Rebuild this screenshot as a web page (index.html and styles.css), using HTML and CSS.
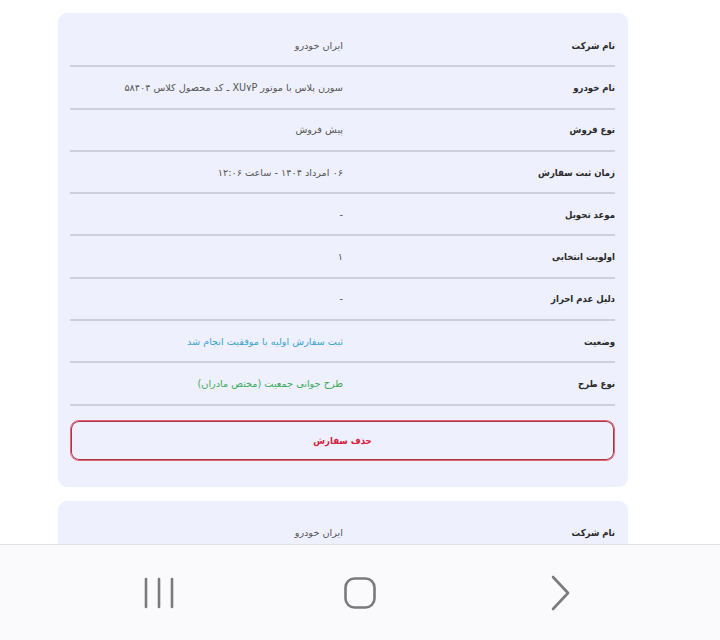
FILE: index.html
```html
<!DOCTYPE html>
<html lang="fa" dir="rtl">
<head>
<meta charset="utf-8">
<title>سفارش‌ها</title>
<link rel="stylesheet" href="styles.css">
</head>
<body>
<main class="page">
  <section class="card">
    <div class="row"><div class="label">نام شرکت</div><div class="value">ایران خودرو</div></div>
    <div class="row"><div class="label">نام خودرو</div><div class="value">سورن پلاس با موتور XU۷P ـ کد محصول کلاس ۵۸۴۰۴</div></div>
    <div class="row"><div class="label">نوع فروش</div><div class="value">پیش فروش</div></div>
    <div class="row"><div class="label">زمان ثبت سفارش</div><div class="value">۰۶ امرداد ۱۴۰۴ - ساعت ۱۲:۰۶</div></div>
    <div class="row"><div class="label">موعد تحویل</div><div class="value">-</div></div>
    <div class="row"><div class="label">اولویت انتخابی</div><div class="value">۱</div></div>
    <div class="row"><div class="label">دلیل عدم احراز</div><div class="value">-</div></div>
    <div class="row"><div class="label">وضعیت</div><div class="value status">ثبت سفارش اولیه با موفقیت انجام شد</div></div>
    <div class="row"><div class="label">نوع طرح</div><div class="value plan">طرح جوانی جمعیت (مختص مادران)</div></div>
    <button class="delete">حذف سفارش</button>
  </section>
  <section class="card">
    <div class="row"><div class="label">نام شرکت</div><div class="value">ایران خودرو</div></div>
    <div class="row"><div class="label">نام خودرو</div><div class="value">سورن پلاس با موتور XU۷P ـ کد محصول کلاس ۵۸۴۰۴</div></div>
  </section>
</main>
<nav class="navbar" dir="ltr">
  <div class="slot">
    <svg width="32" height="34" viewBox="0 0 32 34"><g stroke="#7b7b7b" stroke-width="2.6" stroke-linecap="round"><line x1="3" y1="3" x2="3" y2="31"/><line x1="16" y1="3" x2="16" y2="31"/><line x1="29" y1="3" x2="29" y2="31"/></g></svg>
  </div>
  <div class="slot">
    <svg width="34" height="34" viewBox="0 0 34 34"><rect x="2.5" y="2.5" width="29" height="29" rx="9" fill="none" stroke="#7b7b7b" stroke-width="2.6"/></svg>
  </div>
  <div class="slot">
    <svg width="22" height="36" viewBox="0 0 22 36"><polyline points="3,2 18,18 3,34" fill="none" stroke="#7b7b7b" stroke-width="2.6" stroke-linecap="round" stroke-linejoin="round"/></svg>
  </div>
</nav>
</body>
</html>
```
FILE: styles.css
```css
html, body {
  margin: 0;
  padding: 0;
  background: #ffffff;
}
body {
  font-family: "DejaVu Sans", "Noto Sans", sans-serif;
  width: 720px;
  height: 640px;
  overflow: hidden;
}
.page {
  display: flex;
  flex-direction: column;
  gap: 14px;
  padding: 13px 92px 0 58px;
}
.card {
  background: #eef0fd;
  border-radius: 9px;
  padding: 12px 13px 26px 12px;
  display: flex;
  flex-direction: column;
}
.row {
  display: flex;
  align-items: center;
  height: 40.3px;
  border-bottom: 2px solid #cdcfdc;
}
.label {
  width: 272px;
  flex: none;
  font-family: "DejaVu Sans Condensed", "DejaVu Sans", sans-serif;
  font-stretch: condensed;
  font-size: 9.5px;
  font-weight: bold;
  color: #2a2a2a;
}
.value {
  font-size: 9.7px;
  color: #555;
}
.status { color: #3ba4cc; }
.plan { color: #3dab5a; }
.delete {
  margin-top: 14px;
  height: 41px;
  border: 1.5px solid #e86275;
  box-shadow: inset 0 0 0 1px #a53848;
  border-radius: 9px;
  background: transparent;
  font-family: "DejaVu Sans Condensed", "DejaVu Sans", sans-serif;
  font-stretch: condensed;
  font-size: 9.5px;
  font-weight: bold;
  color: #d42140;
}
.navbar {
  position: fixed;
  left: 0;
  right: 0;
  bottom: 0;
  height: 95px;
  background: #fafafc;
  border-top: 1px solid #e2e2e6;
  display: flex;
  justify-content: center;
  align-items: center;
}
.slot {
  width: 201px;
  display: flex;
  justify-content: center;
  align-items: center;
}
```
